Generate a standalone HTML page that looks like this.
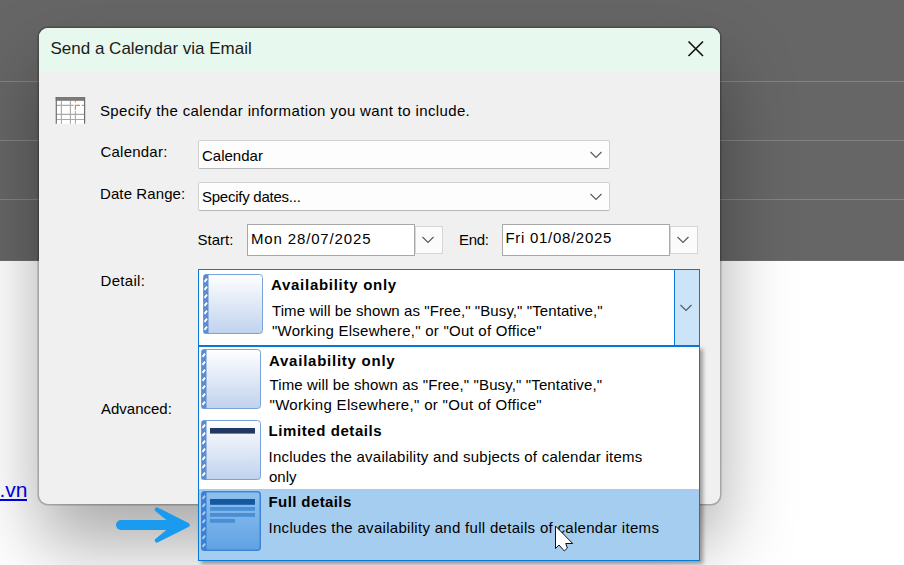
<!DOCTYPE html>
<html><head><meta charset="utf-8">
<style>
*{margin:0;padding:0;box-sizing:border-box}
html,body{width:904px;height:565px;overflow:hidden;background:#fff;font-family:"Liberation Sans",sans-serif;color:#000}
.a{position:absolute;white-space:nowrap}
#bgtop{position:absolute;left:0;top:0;width:904px;height:261px;background:#666}
.hl{position:absolute;left:0;width:904px;height:1px;background:#838383}
#dlg{position:absolute;left:39px;top:28px;width:681px;height:476px;background:#f0f0f0;border-radius:9px;
 box-shadow:0 0 0 1.6px rgba(0,0,0,0.22),0 40px 72px rgba(0,0,0,0.34);overflow:hidden}
#title{position:absolute;left:0;top:0;width:681px;height:43px;background:#e7f8ef}
.t{font-size:15px;line-height:18px}
.combo{position:absolute;background:#fdfdfd;border:1px solid #d0d0d0;border-bottom-color:#b8b8b8;border-radius:2px}
.date{position:absolute;background:#fff;border:1px solid #a8a8a8}
.dbtn{position:absolute;background:#fbfbfb;border:1px solid #d6d6d6}
.chev{position:absolute}
.ico{position:absolute;width:60px;height:60px}
#list{position:absolute;left:198px;top:346px;width:502px;height:215px;background:#fff;border:1px solid #0a78d7;
 box-shadow:3px 3px 4px rgba(0,0,0,0.35)}
</style></head><body>
<div id="bgtop"></div>
<div class="hl" style="top:81px"></div>
<div class="hl" style="top:140px"></div>
<div class="hl" style="top:199px"></div>
<div class="hl" style="top:260px;background:#6e6e6e"></div>

<div class="a" style="left:-0.5px;top:478.2px;font-size:21px;line-height:24px;color:#0000ee">.vn</div><div class="a" style="left:0;top:499px;width:27px;height:2px;background:#0000ee"></div>

<div id="dlg">
 <div id="title"></div>
 <div class="a" style="left:11.5px;top:11px;font-size:17px;line-height:20px;color:#1b1b1b">Send a Calendar via Email</div>
 <svg class="a" style="left:648px;top:12px" width="18" height="18" viewBox="0 0 18 18"><path d="M1.5 1.5L16 16M16 1.5L1.5 16" stroke="#111" stroke-width="1.6"/></svg>
</div>

<!-- calendar icon -->
<svg class="a" style="left:52px;top:93px" width="38" height="35" viewBox="0 0 38 35">
 <rect x="4" y="7.5" width="29" height="23.2" fill="#fff"/>
 <path d="M9.4 7.5V30.7M18.4 7.5V30.7M23.4 7.5V9.6M23.4 18V30.7M4 12.4H21.6M29.6 12.4H33M4 21.4H33M4 26.5H33" stroke="#a9a9a9" stroke-width="1.1"/>
 <rect x="3.7" y="4" width="29.3" height="3.8" fill="#7a7a7a"/>
 <path d="M4.3 4V30.7M32.6 4V30.7" stroke="#6e6e6e" stroke-width="1.2"/>
 <path d="M23.4 16.8V12.4H28" stroke="#e8852a" stroke-width="1.2" fill="none"/>
</svg>

<div class="a t" style="left:100px;top:102.4px;letter-spacing:0.36px">Specify the calendar information you want to include.</div>
<div class="a t" style="left:100.5px;top:142.5px;letter-spacing:0.22px">Calendar:</div>
<div class="a t" style="left:100px;top:184.7px;letter-spacing:0.1px">Date Range:</div>
<div class="a t" style="left:197.5px;top:231.2px;letter-spacing:0px">Start:</div>
<div class="a t" style="left:459px;top:231.4px;letter-spacing:-0.3px">End:</div>
<div class="a t" style="left:100.5px;top:271.7px;letter-spacing:0.3px">Detail:</div>
<div class="a t" style="left:101px;top:400.4px">Advanced:</div>

<div class="combo" style="left:198px;top:140px;width:412px;height:29px"></div>
<div class="a t" style="left:202px;top:146.8px">Calendar</div>
<svg class="chev" style="left:590px;top:151px" width="12" height="8" viewBox="0 0 12 8"><path d="M0.5 1L6 6.5L11.5 1" stroke="#5a5a5a" stroke-width="1.15" fill="none"/></svg>

<div class="combo" style="left:198px;top:182px;width:412px;height:29px"></div>
<div class="a t" style="left:202px;top:188.4px;letter-spacing:-0.25px">Specify dates...</div>
<svg class="chev" style="left:590px;top:193px" width="12" height="8" viewBox="0 0 12 8"><path d="M0.5 1L6 6.5L11.5 1" stroke="#5a5a5a" stroke-width="1.15" fill="none"/></svg>

<div class="date" style="left:247px;top:224px;width:168px;height:32px"></div>
<div class="a t" style="left:251px;top:229.7px;letter-spacing:0.85px">Mon 28/07/2025</div>
<div class="dbtn" style="left:415px;top:226px;width:28px;height:28px"></div>
<svg class="chev" style="left:422px;top:236px" width="12" height="8" viewBox="0 0 12 8"><path d="M0.5 1L6 6.5L11.5 1" stroke="#5a5a5a" stroke-width="1.15" fill="none"/></svg>

<div class="date" style="left:502px;top:224px;width:168px;height:32px"></div>
<div class="a t" style="left:505.5px;top:229.4px;letter-spacing:0.7px">Fri 01/08/2025</div>
<div class="dbtn" style="left:670px;top:226px;width:28px;height:28px"></div>
<svg class="chev" style="left:677px;top:236px" width="12" height="8" viewBox="0 0 12 8"><path d="M0.5 1L6 6.5L11.5 1" stroke="#5a5a5a" stroke-width="1.15" fill="none"/></svg>

<!-- detail box -->
<div class="a" style="left:198px;top:269px;width:502px;height:78px;background:#fff;border:1px solid #0a78d7;border-bottom-width:2px"></div>
<div class="a" style="left:674px;top:269px;width:26px;height:78px;background:#cce4f7;border:1px solid #0a78d7;border-bottom-width:2px"></div>
<svg class="chev" style="left:680px;top:304px" width="12" height="8" viewBox="0 0 12 8"><path d="M0.5 1L6 6.5L11.5 1" stroke="#5a5a5a" stroke-width="1.15" fill="none"/></svg>


<svg width="0" height="0" style="position:absolute">
 <defs>
  <linearGradient id="gN" x1="0" y1="0" x2="0" y2="1"><stop offset="0" stop-color="#ffffff"/><stop offset="1" stop-color="#c0d2ee"/></linearGradient>
  <linearGradient id="gH" x1="0" y1="0" x2="0" y2="1"><stop offset="0" stop-color="#8fc1ed"/><stop offset="1" stop-color="#5fa2e4"/></linearGradient>
  <symbol id="dash" viewBox="0 0 60 60"><path d="M1.5 7.9L4 4.7M1.5 15.9L4 12.7M1.5 23.9L4 20.7M1.5 31.9L4 28.7M1.5 39.9L4 36.7M1.5 47.9L4 44.7M1.5 55.9L4 52.7" stroke="#fff" stroke-width="1.9"/></symbol>
 </defs>
</svg>
<svg class="ico" style="left:203px;top:274px" width="60" height="60" viewBox="0 0 60 60"><rect x="0.5" y="0.5" width="59" height="59" rx="3" fill="url(#gN)" stroke="#7aa2da"/><path d="M0.5 2Q0.5 0.5 2 0.5H5.5V59.5H0.5Z" fill="#5b8cd3"/><use href="#dash" width="60" height="60"/></svg>
<div class="a t" style="left:271px;top:276.1px;font-weight:bold;letter-spacing:0.72px">Availability only</div>
<div class="a t" style="left:272px;top:301.8px;letter-spacing:0.09px">Time will be shown as "Free," "Busy," "Tentative,"</div>
<div class="a t" style="left:272px;top:321.7px;letter-spacing:0.25px">"Working Elsewhere," or "Out of Office"</div>
<div id="list"></div>
<div class="a" style="left:199px;top:489px;width:500px;height:71px;background:#a5cdf0"></div>
<svg class="ico" style="left:201px;top:349px" width="60" height="60" viewBox="0 0 60 60"><rect x="0.5" y="0.5" width="59" height="59" rx="3" fill="url(#gN)" stroke="#7aa2da"/><path d="M0.5 2Q0.5 0.5 2 0.5H5.5V59.5H0.5Z" fill="#5b8cd3"/><use href="#dash" width="60" height="60"/></svg>
<div class="a t" style="left:269px;top:351.9px;font-weight:bold;letter-spacing:0.75px">Availability only</div>
<div class="a t" style="left:269.5px;top:376.4px;letter-spacing:0.13px">Time will be shown as "Free," "Busy," "Tentative,"</div>
<div class="a t" style="left:269.5px;top:396.4px;letter-spacing:0.32px">"Working Elsewhere," or "Out of Office"</div>
<svg class="ico" style="left:201px;top:420px" width="60" height="60" viewBox="0 0 60 60"><rect x="0.5" y="0.5" width="59" height="59" rx="3" fill="url(#gN)" stroke="#7aa2da"/><path d="M0.5 2Q0.5 0.5 2 0.5H5.5V59.5H0.5Z" fill="#5b8cd3"/><use href="#dash" width="60" height="60"/><rect x="9" y="8" width="45" height="5.6" fill="#1f3864"/></svg>
<div class="a t" style="left:268.5px;top:422.4px;font-weight:bold;letter-spacing:0.58px">Limited details</div>
<div class="a t" style="left:268.5px;top:448.3px;letter-spacing:0.23px">Includes the availability and subjects of calendar items</div>
<div class="a t" style="left:269px;top:468.2px">only</div>
<svg class="ico" style="left:201px;top:491px" width="60" height="60" viewBox="0 0 60 60"><rect x="0.75" y="0.75" width="58.5" height="58.5" rx="3" fill="url(#gH)" stroke="#3d85d6" stroke-width="1.5"/><path d="M0.75 2Q0.75 0.75 2 0.75H5.5V59.25H0.75Z" fill="#3a80d6"/><use href="#dash" width="60" height="60" opacity="0.6"/><rect x="9" y="8" width="45" height="5.8" fill="#1557a0"/><rect x="9" y="16" width="45" height="3.8" fill="#4a8ed6"/><rect x="9" y="22" width="45" height="3.8" fill="#4a8ed6"/><rect x="9" y="28" width="25" height="3.8" fill="#4a8ed6"/></svg>
<div class="a t" style="left:268.5px;top:493.2px;font-weight:bold;letter-spacing:0.4px">Full details</div>
<div class="a t" style="left:268.5px;top:518.6px;letter-spacing:0.3px">Includes the availability and full details of calendar items</div>


<svg class="a" style="left:0;top:0" width="904" height="565" viewBox="0 0 904 565"><path d="M121 525H178" stroke="#1a9bf0" stroke-width="10" stroke-linecap="round"/><path d="M187.5 525L157 509.6L176 525L157 540.4Z" fill="#1a9bf0" stroke="#1a9bf0" stroke-width="4.4" stroke-linejoin="round"/></svg>
<svg class="a" style="left:554px;top:525px" width="22" height="30" viewBox="0 0 22 30"><path d="M1.5 1V23.5L5 20L10.3 26L13.4 23L11.7 18.5H18.7Z" fill="#fff" stroke="#111" stroke-width="1" stroke-linejoin="miter"/></svg>
</body></html>
